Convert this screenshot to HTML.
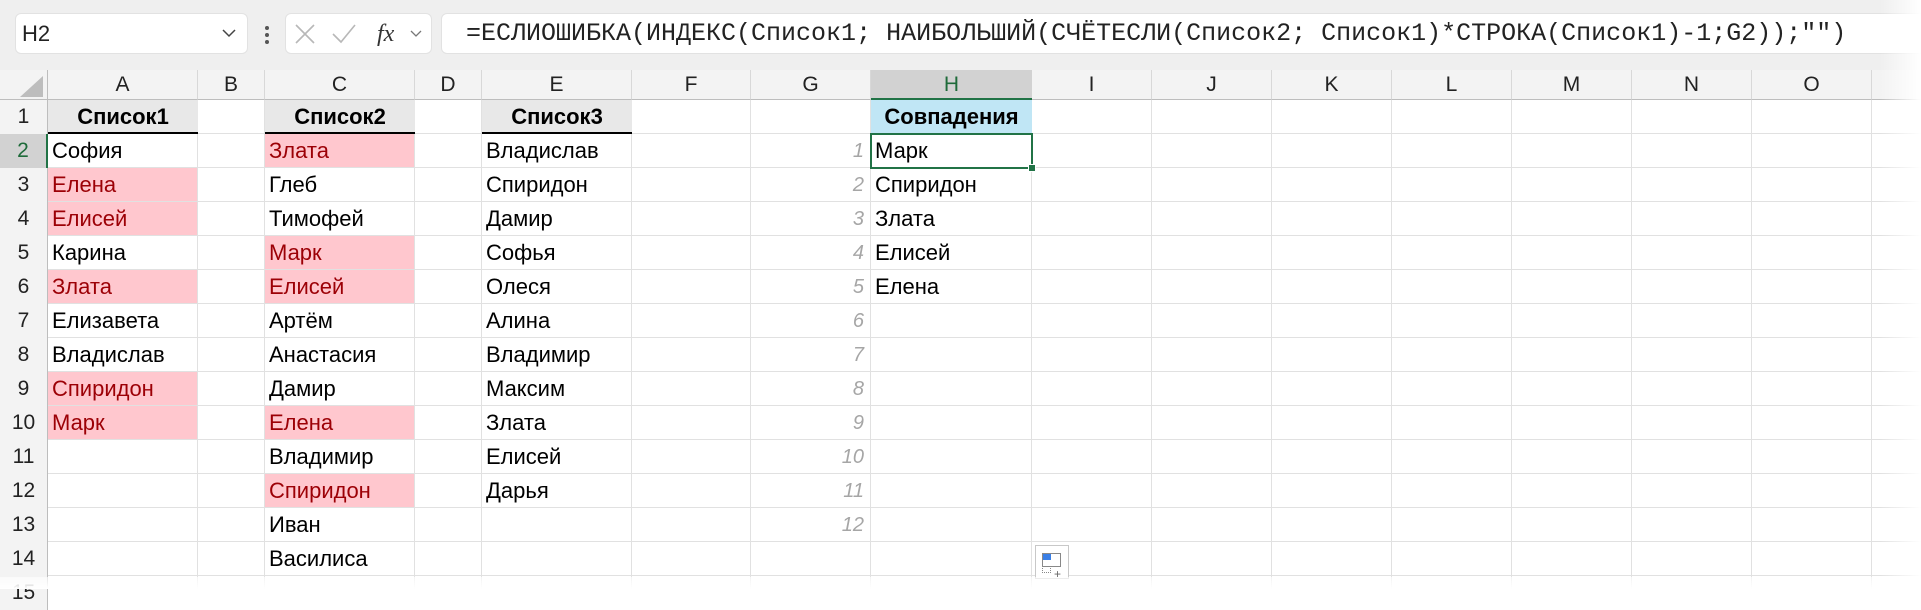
<!DOCTYPE html>
<html><head><meta charset="utf-8"><style>
*{margin:0;padding:0;box-sizing:border-box}
body{width:1921px;height:589px;overflow:hidden;background:#fff;font-family:"Liberation Sans","Noto Sans CJK SC",sans-serif;position:relative}
.top{position:absolute;left:0;top:0;width:1921px;height:70px;background:#efefef}
.box{position:absolute;background:#fff;border:1px solid #e2e2e2;border-radius:6px}
.ch{position:absolute;top:70px;height:30px;background:#f3f3f3;border-bottom:1px solid #bdbdbd;font-size:21px;line-height:30px;text-align:center;color:#222}
.vl{position:absolute;width:1px;background:#e1e1e1;top:100px;height:489px}
.hl{position:absolute;left:0;height:1px;background:#e1e1e1;width:1921px}
.rh{position:absolute;left:0;width:48px;height:34px;background:#f3f3f3;border-right:1px solid #bdbdbd;font-size:21px;line-height:34px;text-align:center;color:#222}
.c{position:absolute;height:33px;line-height:34px;padding-left:4px;font-size:22px;color:#000;white-space:nowrap}
.p{background:#ffc7ce;color:#9c0006}
.h{background:#e8e8e8;font-weight:bold;text-align:center;padding:0;border-bottom:2px solid #000;height:34px}
.g{color:#a6a6a6;font-style:italic;text-align:right;padding-right:6px;font-size:20px}
</style></head><body>
<div class="top"></div>
<div class="box" style="left:15px;top:13px;width:233px;height:41px"></div>
<div style="position:absolute;left:22px;top:13px;line-height:41px;font-size:22px;color:#222">H2</div>
<svg style="position:absolute;left:222px;top:28px" width="14" height="10"><path d="M1 2 L7 8 L13 2" stroke="#444" stroke-width="1.5" fill="none"/></svg>
<div style="position:absolute;left:265px;top:26px;width:4px;height:4px;background:#555;border-radius:2px"></div>
<div style="position:absolute;left:265px;top:33px;width:4px;height:4px;background:#555;border-radius:2px"></div>
<div style="position:absolute;left:265px;top:40px;width:4px;height:4px;background:#555;border-radius:2px"></div>
<div class="box" style="left:285px;top:13px;width:147px;height:41px"></div>
<svg style="position:absolute;left:293px;top:22px" width="135" height="24"><path d="M3 3 L21 21 M21 3 L3 21" stroke="#b8b8b8" stroke-width="1.6"/><path d="M40 12 L48 20 L62 3" stroke="#b8b8b8" stroke-width="1.6" fill="none"/><text x="84" y="19" font-family="Liberation Serif" font-style="italic" font-size="24" fill="#333">fx</text><path d="M118 9 L123 14 L128 9" stroke="#777" stroke-width="1.3" fill="none"/></svg>
<div class="box" style="left:441px;top:13px;width:1500px;height:41px"></div>
<div style="position:absolute;left:466px;top:13px;line-height:41px;font-family:'Liberation Mono',monospace;font-size:25px;color:#222;white-space:nowrap">=ЕСЛИОШИБКА(ИНДЕКС(Список1; НАИБОЛЬШИЙ(СЧЁТЕСЛИ(Список2; Список1)*СТРОКА(Список1)-1;G2));"")</div>

<div class="ch" style="left:0;width:48px;border-right:1px solid #bdbdbd"></div>
<svg style="position:absolute;left:18px;top:76px" width="26" height="22"><path d="M25 0 L25 21 L2 21 Z" fill="#bdbdbd"/></svg>
<div class="ch" style="left:48px;width:150px;border-right:1px solid #d8d8d8">A</div>
<div class="ch" style="left:198px;width:67px;border-right:1px solid #d8d8d8">B</div>
<div class="ch" style="left:265px;width:150px;border-right:1px solid #d8d8d8">C</div>
<div class="ch" style="left:415px;width:67px;border-right:1px solid #d8d8d8">D</div>
<div class="ch" style="left:482px;width:150px;border-right:1px solid #d8d8d8">E</div>
<div class="ch" style="left:632px;width:119px;border-right:1px solid #d8d8d8">F</div>
<div class="ch" style="left:751px;width:120px;border-right:1px solid #d8d8d8">G</div>
<div class="ch" style="left:871px;width:161px;background:#d2d2d2;color:#1e6b3a;border-bottom:2px solid #217346">H</div>
<div class="ch" style="left:1032px;width:120px;border-right:1px solid #d8d8d8">I</div>
<div class="ch" style="left:1152px;width:120px;border-right:1px solid #d8d8d8">J</div>
<div class="ch" style="left:1272px;width:120px;border-right:1px solid #d8d8d8">K</div>
<div class="ch" style="left:1392px;width:120px;border-right:1px solid #d8d8d8">L</div>
<div class="ch" style="left:1512px;width:120px;border-right:1px solid #d8d8d8">M</div>
<div class="ch" style="left:1632px;width:120px;border-right:1px solid #d8d8d8">N</div>
<div class="ch" style="left:1752px;width:120px;border-right:1px solid #d8d8d8">O</div>
<div class="ch" style="left:1872px;width:49px"></div>

<div class="hl" style="top:133px"></div><div class="hl" style="top:167px"></div><div class="hl" style="top:201px"></div><div class="hl" style="top:235px"></div><div class="hl" style="top:269px"></div><div class="hl" style="top:303px"></div><div class="hl" style="top:337px"></div><div class="hl" style="top:371px"></div><div class="hl" style="top:405px"></div><div class="hl" style="top:439px"></div><div class="hl" style="top:473px"></div><div class="hl" style="top:507px"></div><div class="hl" style="top:541px"></div><div class="hl" style="top:575px"></div>
<div class="vl" style="left:197px"></div><div class="vl" style="left:264px"></div><div class="vl" style="left:414px"></div><div class="vl" style="left:481px"></div><div class="vl" style="left:631px"></div><div class="vl" style="left:750px"></div><div class="vl" style="left:870px"></div><div class="vl" style="left:1031px"></div><div class="vl" style="left:1151px"></div><div class="vl" style="left:1271px"></div><div class="vl" style="left:1391px"></div><div class="vl" style="left:1511px"></div><div class="vl" style="left:1631px"></div><div class="vl" style="left:1751px"></div><div class="vl" style="left:1871px"></div>

<div class="rh" style="top:100px">1</div>
<div class="rh" style="top:134px;background:#d2d2d2;color:#1e6b3a;border-right:2px solid #217346">2</div>
<div class="rh" style="top:168px">3</div><div class="rh" style="top:202px">4</div><div class="rh" style="top:236px">5</div><div class="rh" style="top:270px">6</div><div class="rh" style="top:304px">7</div><div class="rh" style="top:338px">8</div><div class="rh" style="top:372px">9</div><div class="rh" style="top:406px">10</div><div class="rh" style="top:440px">11</div><div class="rh" style="top:474px">12</div><div class="rh" style="top:508px">13</div><div class="rh" style="top:542px">14</div><div class="rh" style="top:576px">15</div>

<div class="c h" style="left:48px;top:100px;width:150px">Список1</div>
<div class="c" style="left:48px;top:134px;width:149px">София</div>
<div class="c p" style="left:48px;top:168px;width:149px">Елена</div>
<div class="c p" style="left:48px;top:202px;width:149px">Елисей</div>
<div class="c" style="left:48px;top:236px;width:149px">Карина</div>
<div class="c p" style="left:48px;top:270px;width:149px">Злата</div>
<div class="c" style="left:48px;top:304px;width:149px">Елизавета</div>
<div class="c" style="left:48px;top:338px;width:149px">Владислав</div>
<div class="c p" style="left:48px;top:372px;width:149px">Спиридон</div>
<div class="c p" style="left:48px;top:406px;width:149px">Марк</div>

<div class="c h" style="left:265px;top:100px;width:150px">Список2</div>
<div class="c p" style="left:265px;top:134px;width:149px">Злата</div>
<div class="c" style="left:265px;top:168px;width:149px">Глеб</div>
<div class="c" style="left:265px;top:202px;width:149px">Тимофей</div>
<div class="c p" style="left:265px;top:236px;width:149px">Марк</div>
<div class="c p" style="left:265px;top:270px;width:149px">Елисей</div>
<div class="c" style="left:265px;top:304px;width:149px">Артём</div>
<div class="c" style="left:265px;top:338px;width:149px">Анастасия</div>
<div class="c" style="left:265px;top:372px;width:149px">Дамир</div>
<div class="c p" style="left:265px;top:406px;width:149px">Елена</div>
<div class="c" style="left:265px;top:440px;width:149px">Владимир</div>
<div class="c p" style="left:265px;top:474px;width:149px">Спиридон</div>
<div class="c" style="left:265px;top:508px;width:149px">Иван</div>
<div class="c" style="left:265px;top:542px;width:149px">Василиса</div>

<div class="c h" style="left:482px;top:100px;width:150px">Список3</div>
<div class="c" style="left:482px;top:134px">Владислав</div>
<div class="c" style="left:482px;top:168px">Спиридон</div>
<div class="c" style="left:482px;top:202px">Дамир</div>
<div class="c" style="left:482px;top:236px">Софья</div>
<div class="c" style="left:482px;top:270px">Олеся</div>
<div class="c" style="left:482px;top:304px">Алина</div>
<div class="c" style="left:482px;top:338px">Владимир</div>
<div class="c" style="left:482px;top:372px">Максим</div>
<div class="c" style="left:482px;top:406px">Злата</div>
<div class="c" style="left:482px;top:440px">Елисей</div>
<div class="c" style="left:482px;top:474px">Дарья</div>

<div class="c g" style="left:751px;top:134px;width:119px">1</div>
<div class="c g" style="left:751px;top:168px;width:119px">2</div>
<div class="c g" style="left:751px;top:202px;width:119px">3</div>
<div class="c g" style="left:751px;top:236px;width:119px">4</div>
<div class="c g" style="left:751px;top:270px;width:119px">5</div>
<div class="c g" style="left:751px;top:304px;width:119px">6</div>
<div class="c g" style="left:751px;top:338px;width:119px">7</div>
<div class="c g" style="left:751px;top:372px;width:119px">8</div>
<div class="c g" style="left:751px;top:406px;width:119px">9</div>
<div class="c g" style="left:751px;top:440px;width:119px">10</div>
<div class="c g" style="left:751px;top:474px;width:119px">11</div>
<div class="c g" style="left:751px;top:508px;width:119px">12</div>

<div class="c" style="left:871px;top:100px;width:161px;height:34px;background:#c0e6f5;font-weight:bold;text-align:center;padding:0">Совпадения</div>
<div class="c" style="left:871px;top:168px">Спиридон</div>
<div class="c" style="left:871px;top:202px">Злата</div>
<div class="c" style="left:871px;top:236px">Елисей</div>
<div class="c" style="left:871px;top:270px">Елена</div>
<div class="c" style="left:870px;top:133px;width:163px;height:36px;border:2px solid #217346;line-height:32px;padding-left:3px">Марк</div>
<div style="position:absolute;left:1028px;top:164px;width:8px;height:8px;background:#217346;border:1px solid #fff"></div>

<div style="position:absolute;left:1035px;top:545px;width:34px;height:34px;background:#fff;border:1px solid #c8c8c8"></div>
<div style="position:absolute;left:1042px;top:553px;width:9px;height:7px;background:#3a7fe6"></div>
<div style="position:absolute;left:1042px;top:553px;width:19px;height:14px;border:1px solid #888"></div>
<div style="position:absolute;left:1042px;top:566px;width:9px;height:7px;border:1px dotted #888"></div>
<div style="position:absolute;left:1054px;top:569px;font-size:12px;line-height:10px;color:#666">+</div>
<div style="position:absolute;left:1880px;top:0;width:41px;height:589px;background:linear-gradient(to right,rgba(255,255,255,0),#fff)"></div>
<div style="position:absolute;left:0;top:577px;width:1921px;height:12px;background:linear-gradient(to bottom,rgba(255,255,255,0.6),#fff)"></div>
</body></html>
